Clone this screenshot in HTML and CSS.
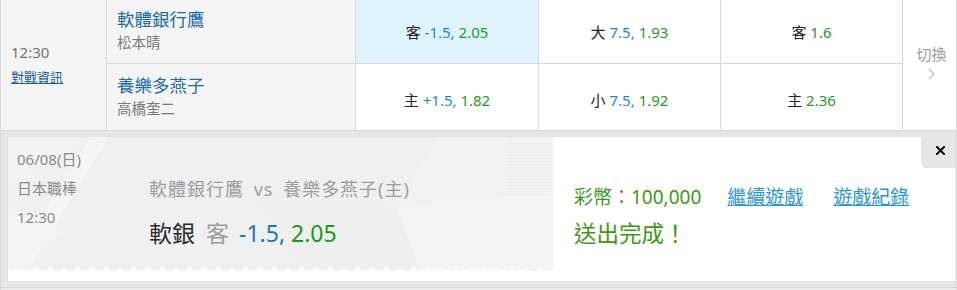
FILE: index.html
```html
<!DOCTYPE html>
<html lang="zh-Hant">
<head>
<meta charset="utf-8">
<title>投注完成</title>
<link rel="stylesheet" href="styles.css">
</head>
<body>
<div class="page">
  <div class="match">
    <div class="time-cell">
      <div class="kick">12:30</div>
      <a class="info-link" href="#">對戰資訊</a>
    </div>
    <div class="teams">
      <div class="team r1"><div class="tname">軟體銀行鷹</div><div class="pitcher">松本晴</div></div>
      <div class="team r2"><div class="tname">養樂多燕子</div><div class="pitcher">高橋奎二</div></div>
    </div>
    <div class="odds">
      <div class="cell r1 sel"><span class="side">客</span> <span class="line">-1.5,</span> <span class="price">2.05</span></div>
      <div class="cell r2"><span class="side">主</span> <span class="line">+1.5,</span> <span class="price">1.82</span></div>
    </div>
    <div class="odds">
      <div class="cell r1"><span class="side">大</span> <span class="line">7.5,</span> <span class="price">1.93</span></div>
      <div class="cell r2"><span class="side">小</span> <span class="line">7.5,</span> <span class="price">1.92</span></div>
    </div>
    <div class="odds">
      <div class="cell r1"><span class="side">客</span> <span class="price">1.6</span></div>
      <div class="cell r2"><span class="side">主</span> <span class="price">2.36</span></div>
    </div>
    <div class="switch">
      <span class="switch-label">切換</span>
      <svg class="chev" width="7" height="12" viewBox="0 0 7 12"><polyline points="1,1 5.8,6 1,11" fill="none" stroke="#bdbdbd" stroke-width="1.3"/></svg>
    </div>
  </div>

  <div class="band">
    <div class="card">
      <div class="slip">
        <svg class="slip-bg" width="546" height="144" viewBox="0 0 546 144">
          <defs>
            <clipPath id="zz">
              <path d="M0 0 H546 V130 q-7 8 -14 0 q-7 8 -14 0 q-7 8 -14 0 q-7 8 -14 0 q-7 8 -14 0 q-7 8 -14 0 q-7 8 -14 0 q-7 8 -14 0 q-7 8 -14 0 q-7 8 -14 0 q-7 8 -14 0 q-7 8 -14 0 q-7 8 -14 0 q-7 8 -14 0 q-7 8 -14 0 q-7 8 -14 0 q-7 8 -14 0 q-7 8 -14 0 q-7 8 -14 0 q-7 8 -14 0 q-7 8 -14 0 q-7 8 -14 0 q-7 8 -14 0 q-7 8 -14 0 q-7 8 -14 0 q-7 8 -14 0 q-7 8 -14 0 q-7 8 -14 0 q-7 8 -14 0 q-7 8 -14 0 q-7 8 -14 0 q-7 8 -14 0 q-7 8 -14 0 q-7 8 -14 0 q-7 8 -14 0 q-7 8 -14 0 q-7 8 -14 0 q-7 8 -14 0 q-7 8 -14 0 Z"/>
            </clipPath>
            <pattern id="stripes" width="4" height="3" patternUnits="userSpaceOnUse">
              <rect width="4" height="1" fill="#e9e9e9"/>
            </pattern>
          </defs>
          <g clip-path="url(#zz)">
            <rect width="546" height="144" fill="#f0f0f0"/>
            <polygon points="0,0 80,0 0,55" fill="#f2f2f2"/>
            <polygon points="82,0 100,0 20,134 3,134" fill="#f5f5f5"/>
            <polygon points="0,70 60,95 0,134" fill="#f3f3f3"/>
            <polygon points="429,0 546,0 546,55 389,71" fill="#f2f2f2"/>
            <polygon points="389,71 546,55 546,134 412,134" fill="#f4f4f4"/>
            <polygon points="498,0 546,0 546,58 498,60" fill="url(#stripes)" opacity="0.6"/>
            <polygon points="250,60 389,71 412,134 300,134" fill="#efefef"/>
          </g>
        </svg>
        <div class="meta">
          <div>06/08(日)</div>
          <div>日本職棒</div>
          <div>12:30</div>
        </div>
        <div class="bet">
          <div class="bet-title">軟體銀行鷹 vs 養樂多燕子(主)</div>
          <div class="pick"><span class="pick-team">軟銀</span><span class="pick-side">客</span><span class="pick-line">-1.5,</span> <span class="pick-price">2.05</span></div>
        </div>
      </div>
      <div class="result">
        <div class="result-row">
          <span class="coins">彩幣：100,000</span>
          <a class="act act-first" href="#">繼續遊戲</a>
          <a class="act act-second" href="#">遊戲紀錄</a>
        </div>
        <div class="done">送出完成！</div>
      </div>
      <button class="close" type="button" aria-label="關閉">
        <svg width="9" height="9" viewBox="0 0 9 9"><path d="M1 1 L8 8 M8 1 L1 8" stroke="#111" stroke-width="2.1" stroke-linecap="square"/></svg>
      </button>
    </div>
  </div>
  <div class="next"></div>
</div>
</body>
</html>
```
FILE: styles.css
```css
* { box-sizing: border-box; }

body {
  margin: 0;
  background: #fff;
  font-family: "Noto Sans", "Noto Sans CJK TC", sans-serif;
  color: #333;
}

.page {
  width: 957px;
  border-left: 1px solid #d9d9d9;
  border-right: 1px solid #d9d9d9;
}

/* ---- match row ---- */
.match {
  display: grid;
  grid-template-columns: 106px 249px 183px 182px 182px 53px;
  border-bottom: 1px solid #d9d9d9;
}

.time-cell {
  background: #f4f4f4;
  border-right: 1px solid #d9d9d9;
  padding: 42px 0 0 10px;
  display: flex;
  flex-direction: column;
  align-items: flex-start;
}

.kick {
  font-size: 15px;
  line-height: 21px;
  color: #737373;
}

.info-link {
  margin-top: 5px;
  font-size: 13px;
  line-height: 18px;
  color: #1d5e95;
  text-decoration: underline;
}

.teams {
  background: #f4f4f4;
  border-right: 1px solid #d9d9d9;
  display: flex;
  flex-direction: column;
}

.team {
  padding-left: 10px;
}

.team.r1 {
  height: 64px;
  padding-top: 8px;
  border-bottom: 1px solid #d9d9d9;
}

.team.r2 {
  height: 66px;
  padding-top: 10px;
}

.tname {
  font-size: 17.5px;
  line-height: 23px;
  color: #1b6ca6;
}

.pitcher {
  margin-top: 1px;
  font-size: 14.5px;
  line-height: 20px;
  color: #7a7a7a;
}

.odds {
  border-right: 1px solid #d9d9d9;
  display: flex;
  flex-direction: column;
}

.cell {
  text-align: center;
  font-size: 15px;
  line-height: 20px;
  background: #fff;
}

.cell.r1 {
  height: 64px;
  padding-top: 22px;
  border-bottom: 1px solid #d9d9d9;
}

.cell.r2 {
  height: 66px;
  padding-top: 26px;
}

.cell.sel {
  background: #dff3fc;
}

.side { color: #222; }
.line { color: #1d88d2; }
.price { color: #1f9a1f; }

.switch {
  background: #fff;
  padding: 44px 0 0 4px;
  display: flex;
  flex-direction: column;
  align-items: center;
}

.switch-label {
  font-size: 15px;
  line-height: 20px;
  color: #9c9c9c;
}

.chev {
  margin-top: 4px;
  display: block;
}

/* ---- confirmation band ---- */
.band {
  background: #e6e6e6;
  padding: 6px 1px 6px 7px;
  border-bottom: 1px solid #d6d6d6;
}

.card {
  position: relative;
  display: flex;
  height: 144px;
  background: #fff;
}

.slip {
  position: relative;
  width: 545px;
  overflow: hidden;
  display: flex;
  padding: 8px 0 0 9px;
}

.slip-bg {
  position: absolute;
  left: 0;
  top: 0;
  display: block;
}

.meta {
  position: relative;
  width: 132px;
  font-size: 15px;
  line-height: 29px;
  color: #8a8a8a;
}

.bet {
  position: relative;
  padding-top: 31px;
}

.bet-title {
  font-size: 18px;
  line-height: 26px;
  letter-spacing: 1px;
  word-spacing: 4px;
  color: #9d9d9d;
  white-space: nowrap;
}

.pick {
  margin-top: 16px;
  font-size: 23px;
  line-height: 30px;
  white-space: nowrap;
}

.pick-team { color: #2b2b2b; }
.pick-side { color: #9b9b9b; margin-left: 11px; }
.pick-line { color: #1a78b9; margin-left: 10px; }
.pick-price { color: #1a9a1a; }

.result {
  flex: 1;
  padding: 47px 0 0 21px;
}

.result-row {
  display: flex;
  align-items: baseline;
  font-size: 19px;
  line-height: 26px;
  white-space: nowrap;
}

.coins {
  color: #3a9a16;
}

.act {
  color: #2a95d8;
  text-decoration: underline;
}

.act-first { margin-left: 26px; }
.act-second { margin-left: 30px; }

.done {
  margin-top: 9px;
  font-size: 22.5px;
  line-height: 30px;
  color: #3a9a16;
}

.close {
  position: absolute;
  top: 0;
  right: 0;
  width: 34px;
  height: 31px;
  margin: 0;
  border: 0;
  padding: 9px 0 0 15px;
  background: #e6e6e6;
  border-bottom-left-radius: 5px;
  display: flex;
  align-items: flex-start;
  justify-content: flex-start;
  cursor: pointer;
}

.close svg { display: block; }

.next {
  height: 4px;
  background: #ececec;
}
```
